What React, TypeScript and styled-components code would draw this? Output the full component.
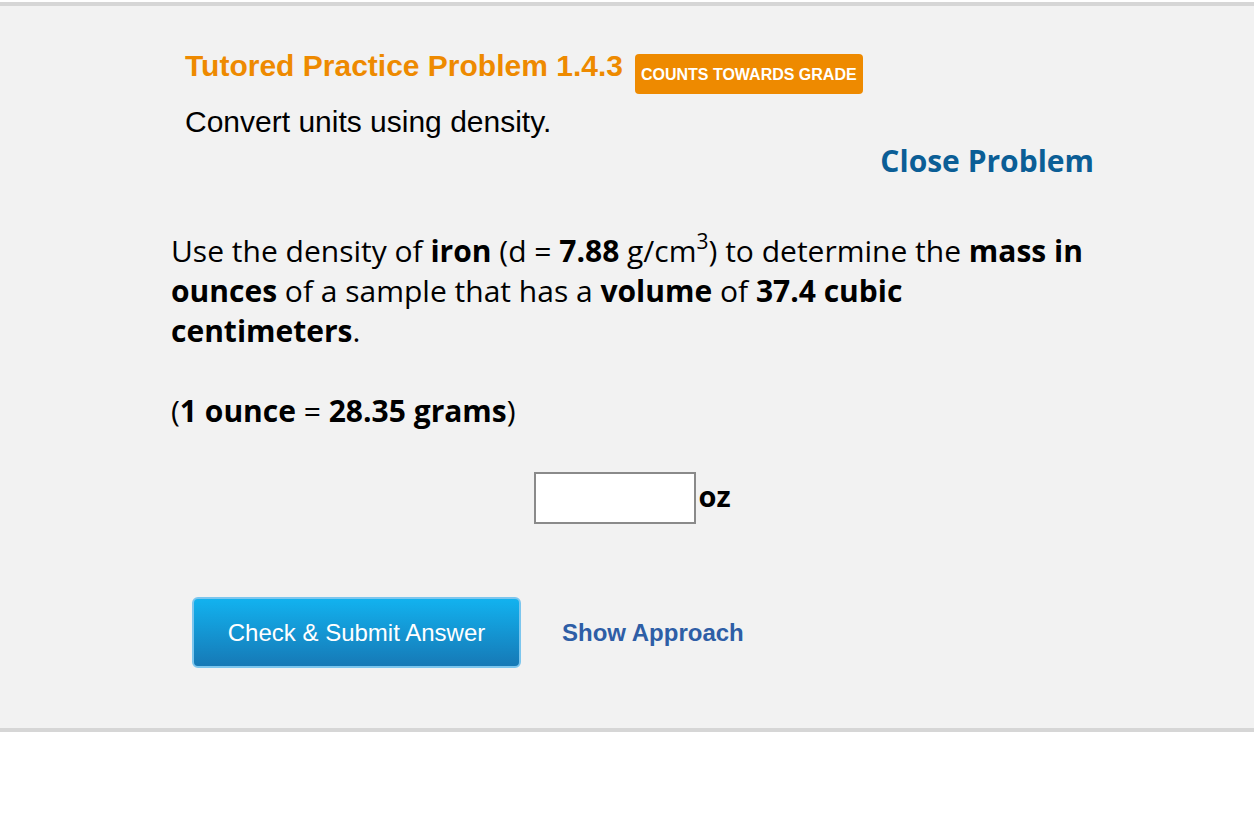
import React from "react";
import styled, { createGlobalStyle } from "styled-components";

const Global = createGlobalStyle`
  html, body { margin: 0; padding: 0; background: #ffffff; }
  body { font-family: "Liberation Sans", Arial, sans-serif; }
`;

const Panel = styled.div`
  margin-top: 2px;
  height: 730px;
  box-sizing: border-box;
  background: #f2f2f2;
  border-top: 4px solid #d6d6d6;
  border-bottom: 4px solid #d6d6d6;
  padding: 40px 160px 0 171px;
`;

const Header = styled.div`
  padding-left: 14px;
`;

const TitleRow = styled.div`
  display: flex;
  align-items: flex-start;
  gap: 12px;
`;

const Title = styled.h1`
  margin: 0;
  font-family: "Liberation Sans", Arial, sans-serif;
  font-weight: 700;
  font-size: 30px;
  line-height: 40px;
  color: #ee8a00;
`;

const Badge = styled.span`
  margin-top: 8px;
  background: #ee8a00;
  color: #ffffff;
  font-family: "Liberation Sans", Arial, sans-serif;
  font-weight: 700;
  font-size: 16px;
  line-height: 42px;
  height: 40px;
  padding: 0 6px;
  border-radius: 4px;
`;

const Subtitle = styled.p`
  margin: 10px 0 0;
  font-size: 30px;
  line-height: 36px;
  color: #000;
`;

const CloseRow = styled.div`
  display: flex;
  justify-content: flex-end;
  margin-top: 1px;
`;

const CloseLink = styled.a`
  font-family: "Open Sans", sans-serif;
  font-weight: 700;
  font-size: 30px;
  line-height: 40px;
  color: #0b5e96;
  text-decoration: none;
`;

const Question = styled.p`
  margin: 50px 0 0;
  font-family: "Open Sans", sans-serif;
  font-size: 30px;
  line-height: 40px;
  color: #000;
  max-width: 920px;
  b { font-weight: 700; }
  sup { font-size: 21px; line-height: 0; vertical-align: 13px; }
`;

const AnswerRow = styled.div`
  display: flex;
  justify-content: center;
  align-items: center;
  margin: 41px 0 0;
`;

const Input = styled.input`
  width: 162px;
  height: 52px;
  box-sizing: border-box;
  border: 2px solid #8a8a8a;
  background: #fff;
  margin: 0 2px 0 0;
`;

const Unit = styled.span`
  font-family: "Open Sans", sans-serif;
  font-weight: 700;
  font-size: 29px;
  color: #000;
  margin-top: -6px;
`;

const Actions = styled.div`
  display: flex;
  align-items: center;
  gap: 41px;
  margin-top: 73px;
  padding-left: 21px;
`;

const SubmitButton = styled.button`
  width: 329px;
  height: 71px;
  box-sizing: border-box;
  border: 2px solid #7cc6ee;
  border-radius: 6px;
  background: linear-gradient(to bottom, #12b2ef 0%, #1679b6 100%);
  color: #ffffff;
  font-family: "Liberation Sans", Arial, sans-serif;
  font-size: 24px;
  cursor: pointer;
`;

const ApproachLink = styled.a`
  font-family: "Liberation Sans", Arial, sans-serif;
  font-weight: 700;
  font-size: 24px;
  color: #2e5ea6;
  text-decoration: none;
`;

export default function App() {
  return (
    <>
      <Global />
      <Panel>
        <Header>
          <TitleRow>
            <Title>Tutored Practice Problem 1.4.3</Title>
            <Badge>COUNTS TOWARDS GRADE</Badge>
          </TitleRow>
          <Subtitle>Convert units using density.</Subtitle>
        </Header>
        <CloseRow>
          <CloseLink href="#">Close Problem</CloseLink>
        </CloseRow>
        <Question>
          Use the density of <b>iron</b> (d = <b>7.88</b> g/cm<sup>3</sup>) to determine the <b>mass in ounces</b> of a sample that has a <b>volume</b> of <b>37.4 cubic centimeters</b>.
          <br />
          <br />
          (<b>1 ounce</b> = <b>28.35 grams</b>)
        </Question>
        <AnswerRow>
          <Input type="text" />
          <Unit>oz</Unit>
        </AnswerRow>
        <Actions>
          <SubmitButton>Check &amp; Submit Answer</SubmitButton>
          <ApproachLink href="#">Show Approach</ApproachLink>
        </Actions>
      </Panel>
    </>
  );
}
